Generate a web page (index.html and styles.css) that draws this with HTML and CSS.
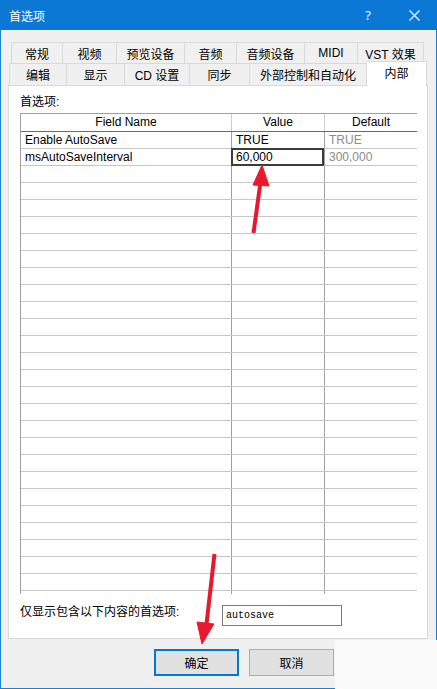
FILE: index.html
```html
<!DOCTYPE html>
<html>
  <head>
    <meta charset="utf-8">
    <title>首选项</title>
    <link rel="stylesheet" href="styles.css">
  </head>
  <body>
    <div class="window">
      <div class="titlebar">
        <span class="title">首选项</span>
        <span class="tbtn help">?</span>
        <span class="tbtn">
          <svg width="11" height="11" viewBox="0 0 11 11"><path d="M0.5 0.5 L10.5 10.5 M10.5 0.5 L0.5 10.5" stroke="#fff" stroke-width="1.2"/></svg>
        </span>
      </div>
      <div class="frame">
        <div class="tabrow back">
          <div class="tab w52">常规</div>
          <div class="tab w54">视频</div>
          <div class="tab w68">预览设备</div>
          <div class="tab w52">音频</div>
          <div class="tab w68">音频设备</div>
          <div class="tab w53">MIDI</div>
          <div class="tab w66">VST 效果</div>
        </div>
        <div class="tabrow front">
          <div class="tab w58">编辑</div>
          <div class="tab w58">显示</div>
          <div class="tab w65">CD 设置</div>
          <div class="tab w60">同步</div>
          <div class="tab w117">外部控制和自动化</div>
          <div class="tab w60 active">内部</div>
        </div>
        <div class="panel">
          <div class="caption">首选项:</div>
          <div class="grid">
            <div class="row head"><span>Field Name</span><span>Value</span><span>Default</span></div>
            <div class="row"><span>Enable AutoSave</span><span>TRUE</span><span class="dim">TRUE</span></div>
            <div class="row"><span>msAutoSaveInterval</span><span class="current">60,000</span><span class="dim">300,000</span></div>
            <div class="row"><span></span><span></span><span></span></div>
            <div class="row"><span></span><span></span><span></span></div>
            <div class="row"><span></span><span></span><span></span></div>
            <div class="row"><span></span><span></span><span></span></div>
            <div class="row"><span></span><span></span><span></span></div>
            <div class="row"><span></span><span></span><span></span></div>
            <div class="row"><span></span><span></span><span></span></div>
            <div class="row"><span></span><span></span><span></span></div>
            <div class="row"><span></span><span></span><span></span></div>
            <div class="row"><span></span><span></span><span></span></div>
            <div class="row"><span></span><span></span><span></span></div>
            <div class="row"><span></span><span></span><span></span></div>
            <div class="row"><span></span><span></span><span></span></div>
            <div class="row"><span></span><span></span><span></span></div>
            <div class="row"><span></span><span></span><span></span></div>
            <div class="row"><span></span><span></span><span></span></div>
            <div class="row"><span></span><span></span><span></span></div>
            <div class="row"><span></span><span></span><span></span></div>
            <div class="row"><span></span><span></span><span></span></div>
            <div class="row"><span></span><span></span><span></span></div>
            <div class="row"><span></span><span></span><span></span></div>
            <div class="row"><span></span><span></span><span></span></div>
            <div class="row"><span></span><span></span><span></span></div>
            <div class="row"><span></span><span></span><span></span></div>
            <div class="row"><span></span><span></span><span></span></div>
            <div class="row tail"><span></span><span></span><span></span></div>
          </div>
          <div class="filter">
            <label for="search">仅显示包含以下内容的首选项:</label>
            <div class="search" id="search">autosave</div>
          </div>
        </div>
        <div class="actions">
          <button class="btn default">确定</button>
          <button class="btn">取消</button>
        </div>
      </div>
      <div class="wash"></div>
      <!-- red callout arrows -->
      <svg class="marks" width="437" height="689" viewBox="0 0 437 689">
        <g fill="#e8192c" stroke="#e8192c">
          <path d="M253.5 233 L260.5 182" stroke-width="4" fill="none"/>
          <polygon points="262,165 253,185 269,186" stroke-width="1"/>
          <path d="M214.5 554 L206.5 624" stroke-width="4" fill="none"/>
          <polygon points="202,644 197,622 214,624" stroke-width="1"/>
        </g>
      </svg>
    </div>
  </body>
</html>
```

FILE: styles.css
```css
* {
    box-sizing: border-box;
}
body {
    margin: 0;
    font: 12px "Liberation Sans", "Noto Sans CJK SC", sans-serif;
    color: #000;
}
.window {
    position: relative;
    width: 437px;
    height: 689px;
    background: #f0f0f0;
}
.titlebar {
    height: 30px;
    background: #0b78d6;
    color: #fff;
    display: flex;
    align-items: center;
    padding-left: 9px;
}
.title {
    flex: 1;
    font-family: "Noto Sans CJK SC", sans-serif;
}
.tbtn {
    width: 46px;
    height: 30px;
    display: flex;
    align-items: center;
    justify-content: center;
}
.help {
    font: 13px "Noto Sans", sans-serif;
}
.frame {
    height: 659px;
    border: 1px solid #1a7fd5;
    border-top: 0;
    padding: 12px 8px 0 7px;
}

/* tab strip, two rows */
.tabrow {
    display: flex;
}
.tabrow.back {
    height: 21px;
    margin-left: 3px;
}
.tabrow.front {
    height: 24px;
    margin-top: -2px;
    margin-left: 1px;
    position: relative;
    z-index: 1;
}
.tab {
    height: 100%;
    display: flex;
    align-items: center;
    justify-content: center;
    white-space: nowrap;
    background: #f0f0f0;
    border-top: 1px solid #d9d9d9;
    border-right: 1px solid #d9d9d9;
}
.tab:first-child {
    border-left: 1px solid #d9d9d9;
}
.front .tab {
    height: 22px;
    align-self: flex-end;
}
.front .tab.active {
    height: 25px;
    align-self: flex-start;
    background: #fff;
    padding-bottom: 4px;
}
.w52 { width: 52px; }
.w53 { width: 53px; }
.w54 { width: 54px; }
.w58 { width: 58px; }
.w60 { width: 60px; }
.w65 { width: 65px; }
.w66 { width: 66px; }
.w68 { width: 68px; }
.w117 { width: 117px; }

.panel {
    width: 420px;
    height: 554px;
    border: 1px solid #d9d9d9;
    background: #fff;
    padding: 8px 10px 0 11px;
}
.caption {
    height: 16px;
    line-height: 16px;
    margin-bottom: 3px;
}

/* property grid */
.grid {
    width: 397px;
    border-left: 1px solid #a0a0a0;
}
.row {
    display: grid;
    grid-template-columns: 211px 93px 92px;
    height: 17px;
    border-bottom: 1px solid #c6c6c6;
}
.row > span {
    border-right: 1px solid #a0a0a0;
    padding-left: 4px;
    line-height: 16px;
    white-space: nowrap;
    overflow: hidden;
}
.row > span:last-child {
    border-right: 0;
}
.row.head {
    height: 19px;
    border-top: 1px solid #a0a0a0;
    border-bottom: 1px solid #6a6a6a;
}
.row.head > span {
    text-align: center;
    padding-left: 0;
    line-height: 17px;
    border-right-color: #cfcfcf;
}
.row.tail {
    height: 3px;
    border-bottom: 0;
}
.dim {
    color: #8c8c8c;
}
.row > span.current {
    position: relative;
    overflow: visible;
}
.current::after {
    content: "";
    position: absolute;
    left: -1px;
    top: -1px;
    right: 0;
    bottom: -1px;
    border: 2px solid #3c3c3c;
}

.filter {
    display: grid;
    grid-template-columns: 202px 120px;
    align-items: start;
    margin-top: 11px;
}
.filter label {
    line-height: 15px;
}
.search {
    height: 21px;
    border: 1px solid #7a7a7a;
    padding-left: 3px;
    font: 10px "Liberation Mono", monospace;
    line-height: 19px;
}

.actions {
    display: flex;
    justify-content: flex-end;
    gap: 10px;
    margin-top: 10px;
    padding-right: 94px;
}
.btn {
    width: 85px;
    height: 27px;
    background: #e1e1e1;
    border: 1px solid #adadad;
    font: 12px "Noto Sans CJK SC", sans-serif;
    color: #000;
    padding: 0;
}
.btn.default {
    border: 2px solid #0078d7;
}

/* pale patch over the lower right corner */
.wash {
    position: absolute;
    left: 335px;
    top: 640px;
    width: 102px;
    height: 49px;
    background: #fbfbfb;
}
.marks {
    position: absolute;
    left: 0;
    top: 0;
    pointer-events: none;
}
```
